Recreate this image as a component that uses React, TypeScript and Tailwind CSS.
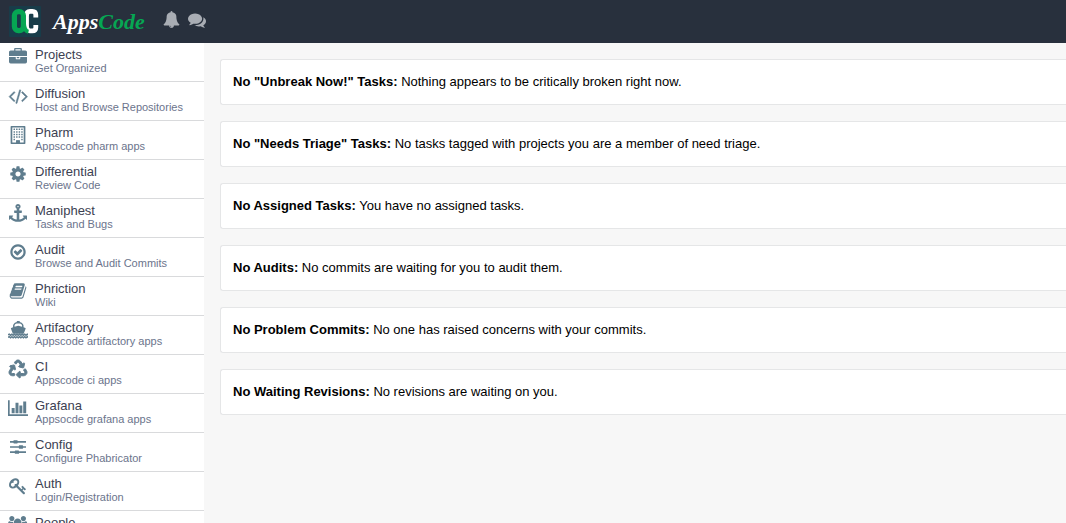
import type { ReactNode } from "react";
import { FaRecycle } from "react-icons/fa";

function Glyph({ width = 1792, children }: { width?: number; children: ReactNode }) {
  return (
    <svg viewBox={`0 0 ${width} 1792`} className="h-[18px] w-auto shrink-0" fill="currentColor" aria-hidden="true">
      {children}
    </svg>
  );
}

const briefcase = (
  <Glyph>
    <path d="M640 256h512v-128h-512v128zm1152 640v480q0 66-47 113t-113 47h-1472q-66 0-113-47t-47-113v-480h672v160q0 26 19 45t45 19h320q26 0 45-19t19-45v-160h672zm-768 0v128h-256v-128h256zm768-480v384h-1792v-384q0-66 47-113t113-47h352v-160q0-40 28-68t68-28h576q40 0 68 28t28 68v160h352q66 0 113 47t47 113z" />
  </Glyph>
);

const code = (
  <Glyph width={2048}>
    <path
      stroke="currentColor"
      strokeWidth="50"
      d="M681 1399l-50 50q-10 10-23 10t-23-10l-466-466q-10-10-10-23t10-23l466-466q10-10 23-10t23 10l50 50q10 10 10 23t-10 23l-393 393 393 393q10 10 10 23t-10 23zm591-1067l-373 1291q-4 13-15.5 19.5t-23.5 2.5l-62-17q-13-4-19.5-15.5t-2.5-24.5l373-1291q4-13 15.5-19.5t23.5-2.5l62 17q13 4 19.5 15.5t2.5 24.5zm657 651l-466 466q-10 10-23 10t-23-10l-50-50q-10-10-10-23t10-23l393-393-393-393q-10-10-10-23t10-23l50-50q10-10 23-10t23 10l466 466q10 10 10 23t-10 23z"
    />
  </Glyph>
);

const building = (
  <Glyph>
    <path
      fillRule="evenodd"
      d="M224 0h1344q64 0 64 64v1664q0 64-64 64h-1344q-64 0-64-64v-1664q0-64 64-64zM330 150v1492h374v-202q0-32 32-32h320q32 0 32 32v202h374v-1492z"
    />
    <path d="M720 1430h352v230h-352z" opacity="0.75" />
    {[256, 512, 768, 1024].map((y) =>
      [448, 704, 960, 1216].map((x) => <rect key={`${x}-${y}`} x={x} y={y} width="150" height="150" rx="30" />),
    )}
    <rect x="448" y="1280" width="150" height="150" rx="30" />
    <rect x="1216" y="1280" width="150" height="150" rx="30" />
  </Glyph>
);

const gear = (
  <Glyph>
    <path d="M1152 896q0-106-75-181t-181-75-181 75-75 181 75 181 181 75 181-75 75-181zm512-109v222q0 12-8 23t-20 13l-185 28q-19 54-39 91 35 50 107 138 10 12 10 25t-9 23q-27 37-99 108t-94 71q-12 0-26-9l-138-108q-44 23-91 38-16 136-29 186-7 28-36 28h-222q-14 0-24.5-8.5t-11.5-21.5l-28-184q-49-16-90-37l-141 107q-10 9-25 9-14 0-25-11-126-114-165-168-7-10-7-23 0-12 8-23 15-21 51-66.5t54-70.5q-27-50-41-99l-183-27q-13-2-21-12.5t-8-23.5v-222q0-12 8-23t19-13l186-28q14-46 39-92-40-57-107-138-10-12-10-24 0-10 9-23 26-36 98.5-107.5t94.5-71.5q13 0 26 10l138 107q44-23 91-38 16-136 29-186 7-28 36-28h222q14 0 24.5 8.5t11.5 21.5l28 184q49 16 90 37l142-107q9-9 24-9 13 0 25 10 129 119 165 170 7 8 7 22 0 12-8 23-15 21-51 66.5t-54 70.5q26 50 41 98l183 28q13 2 21 12.5t8 23.5z" />
  </Glyph>
);

const anchor = (
  <Glyph>
    <path d="M960 256q0-26-19-45t-45-19-45 19-19 45 19 45 45 19 45-19 19-45zm832 928v352q0 22-20 30-8 2-12 2-13 0-23-9l-93-93q-119 143-318.5 226.5t-429.5 83.5-429.5-83.5-318.5-226.5l-93 93q-9 9-23 9-4 0-12-2-20-8-20-30v-352q0-14 9-23t23-9h352q22 0 30 20 8 19-7 35l-100 100q67 91 189.5 153.5t271.5 82.5v-647h-192q-26 0-45-19t-19-45v-128q0-26 19-45t45-19h192v-163q-58-34-93-92.5t-35-128.5q0-106 75-181t181-75 181 75 75 181q0 70-35 128.5t-93 92.5v163h192q26 0 45 19t19 45v128q0 26-19 45t-45 19h-192v647q149-20 271.5-82.5t189.5-153.5l-100-100q-15-16-7-35 8-20 30-20h352q14 0 23 9t9 23z" />
  </Glyph>
);

const checkCircle = (
  <Glyph>
    <path d="M1299 813l-422 422q-19 19-45 19t-45-19l-294-294q-19-19-19-45t19-45l102-102q19-19 45-19t45 19l147 147 275-275q19-19 45-19t45 19l102 102q19 19 19 45t-19 45zm141 83q0-148-73-273t-198-198-273-73-273 73-198 198-73 273 73 273 198 198 273 73 273-73 198-198 73-273zm224 0q0 209-103 385.5t-279.5 279.5-385.5 103-385.5-103-279.5-279.5-103-385.5 103-385.5 279.5-279.5 385.5-103 385.5 103 279.5 279.5 103 385.5z" />
  </Glyph>
);

const book = (
  <Glyph>
    <path d="M1703 478q40 57 18 129l-275 906q-19 64-76.5 107.5t-122.5 43.5h-923q-77 0-148.5-53.5t-99.5-131.5q-24-67-2-127 0-4 3-27t4-37q1-8-3-21.5t-3-19.5q2-11 8-21t16.5-23.5 16.5-23.5q23-38 45-91.5t30-91.5q3-10 .5-30t-.5-28q3-11 17-28t17-23q21-36 42-92t25-90q1-9-2.5-32t.5-28q4-13 22-30.5t22-22.5q19-26 42.5-84.5t27.5-96.5q1-8-3-25.5t-2-26.5q2-8 9-18t18-23 17-21q8-12 16.5-30.5t15-35 16-36 19.5-32 26.5-23.5 36-11.5 47.5 5.5l-1 3q38-9 51-9h761q74 0 114 56t18 130l-274 906q-36 119-71.5 153.5t-128.5 34.5h-869q-27 0-38 15-11 16-1 43 24 70 144 70h923q29 0 56-15.5t35-41.5l300-987q7-22 5-57 38 15 59 43zm-1064 2q-4 13 2 22.5t20 9.5h608q13 0 25.5-9.5t16.5-22.5l21-64q4-13-2-22.5t-20-9.5h-608q-13 0-25.5 9.5t-16.5 22.5zm-83 256q-4 13 2 22.5t20 9.5h608q13 0 25.5-9.5t16.5-22.5l21-64q4-13-2-22.5t-20-9.5h-608q-13 0-25.5 9.5t-16.5 22.5z" />
  </Glyph>
);

const ship = (
  <Glyph width={2048}>
    <path
      fillRule="evenodd"
      d="M880 0h288v100q230 30 330 230l50 110v190l180 60q50 20 24 80l-190 500h-1076l-190-500q-26-60 24-80l180-60v-190l50-110q100-200 330-230zM650 430v150l374-110 374 110v-150q-60-150-220-180h-308q-160 30-220 180z"
    />
    <path
      d="M0 1390l128-80 128 110 128-110 128 110 128-110 128 110 128-110 128 110 128-110 128 110 128-110 128 110 128-110 128 110 128-110 128 80M0 1640l128-80 128 110 128-110 128 110 128-110 128 110 128-110 128 110 128-110 128 110 128-110 128 110 128-110 128 110 128-110 128 80"
      fill="none"
      stroke="currentColor"
      strokeWidth="150"
    />
  </Glyph>
);

const recycle = <FaRecycle className="size-[18px] overflow-visible stroke-current stroke-[28px]" />;

const chart = (
  <Glyph width={2048}>
    <path d="M660 896v512h-296v-512h296zm384-512v1024h-296v-1024h296zm1004 1132v168h-2048v-1556h168v1388h1880zm-620-876v768h-296v-768h296zm384-384v1152h-296v-1152h296z" />
  </Glyph>
);

const sliders = (
  <Glyph>
    <path d="M100 300h412v168h-412zM832 300h860v168h-860zM500 220h300q64 0 64 64v200q0 64-64 64h-300q-64 0-64-64v-200q0-64 64-64zM100 812h924v168h-924zM1344 812h348v168h-348zM1040 732h300q64 0 64 64v200q0 64-64 64h-300q-64 0-64-64v-200q0-64 64-64zM100 1324h540v168h-540zM960 1324h732v168h-732zM640 1244h300q64 0 64 64v200q0 64-64 64h-300q-64 0-64-64v-200q0-64 64-64z" />
  </Glyph>
);

const key = (
  <Glyph>
    <path d="M832 512q0-80-56-136t-136-56-136 56-56 136q0 42 19 83-41-19-83-19-80 0-136 56t-56 136 56 136 136 56 136-56 56-136q0-42-19-83 41 19 83 19 80 0 136-56t56-136zm851 704q0 17-49 66t-66 49q-9 0-28.5-16t-36.5-33-38.5-40-24.5-26l-96 96 220 220q28 28 28 68 0 42-39 81t-81 39q-40 0-68-28l-671-671q-176 131-365 131-163 0-265.5-102.5t-102.5-265.5q0-160 95-313t248-248 313-95q163 0 265.5 102.5t102.5 265.5q0 189-131 365l355 355 96-96q-3-3-26-24.5t-40-38.5-33-36.5-16-28.5q0-17 49-66t66-49q13 0 23 10 6 6 46 44.5t82 79.5 86.5 86 73 78 28.5 41z" />
  </Glyph>
);

const people = (
  <Glyph width={1920}>
    <path d="M593 896q-162 5-265 128h-134q-82 0-138-40.5t-56-118.5q0-353 124-353 6 0 43.5 21t97.5 42.5 119 21.5q67 0 133-23-5 37-5 66 0 139 81 256zm1071 637q0 120-73 189.5t-194 69.5h-874q-121 0-194-69.5t-73-189.5q0-53 3.5-103.5t14-109 26.5-108.5 43-97.5 62-81 85.5-53.5 111.5-20q10 0 43 21.5t73 48 107 48 135 21.5 135-21.5 107-48 73-48 43-21.5q61 0 111.5 20t85.5 53.5 62 81 43 97.5 26.5 108.5 14 109 3.5 103.5zm-1024-1277q0 106-75 181t-181 75-181-75-75-181 75-181 181-75 181 75 75 181zm704 384q0 159-112.5 271.5t-271.5 112.5-271.5-112.5-112.5-271.5 112.5-271.5 271.5-112.5 271.5 112.5 112.5 271.5zm576 225q0 78-56 118.5t-138 40.5h-134q-103-123-265-128 81-117 81-256 0-29-5-66 66 23 133 23 59 0 119-21.5t97.5-42.5 43.5-21q124 0 124 353zm-128-609q0 106-75 181t-181 75-181-75-75-181 75-181 181-75 181 75 75 181z" />
  </Glyph>
);

const apps: { name: string; detail?: string; icon: ReactNode }[] = [
  { name: "Projects", detail: "Get Organized", icon: briefcase },
  { name: "Diffusion", detail: "Host and Browse Repositories", icon: code },
  { name: "Pharm", detail: "Appscode pharm apps", icon: building },
  { name: "Differential", detail: "Review Code", icon: gear },
  { name: "Maniphest", detail: "Tasks and Bugs", icon: anchor },
  { name: "Audit", detail: "Browse and Audit Commits", icon: checkCircle },
  { name: "Phriction", detail: "Wiki", icon: book },
  { name: "Artifactory", detail: "Appscode artifactory apps", icon: ship },
  { name: "CI", detail: "Appscode ci apps", icon: recycle },
  { name: "Grafana", detail: "Appsocde grafana apps", icon: chart },
  { name: "Config", detail: "Configure Phabricator", icon: sliders },
  { name: "Auth", detail: "Login/Registration", icon: key },
  { name: "People", icon: people },
];

const notices = [
  { title: 'No "Unbreak Now!" Tasks:', text: "Nothing appears to be critically broken right now." },
  { title: 'No "Needs Triage" Tasks:', text: "No tasks tagged with projects you are a member of need triage." },
  { title: "No Assigned Tasks:", text: "You have no assigned tasks." },
  { title: "No Audits:", text: "No commits are waiting for you to audit them." },
  { title: "No Problem Commits:", text: "No one has raised concerns with your commits." },
  { title: "No Waiting Revisions:", text: "No revisions are waiting on you." },
];

function Logo() {
  return (
    <svg viewBox="0 0 32 31" className="h-[31px] w-8 shrink-0" fill="none" aria-hidden="true">
      <rect width="32" height="31" rx="1" fill="#183c49" />
      <path
        d="M26.8 11.5V9Q26.8 5.4 23.4 5.4H21Q17.5 5.4 17.5 10V20Q17.5 24.8 21 24.8H23.4Q26.8 24.8 26.8 21.4V19"
        stroke="#fff"
        strokeWidth="4.8"
      />
      <rect x="5.4" y="5.6" width="9" height="19" rx="4" stroke="#06a653" strokeWidth="5.2" />
      <path d="M15 18q.5 7 4.5 7.8" stroke="#06a653" strokeWidth="4" />
    </svg>
  );
}

export default function App() {
  return (
    <div className="flex h-screen flex-col overflow-hidden bg-[#f7f7f7] font-['Liberation_Sans',Arial,sans-serif] text-[13px] text-black">
      <header className="flex h-[43px] shrink-0 items-center bg-[#28303d] pl-[9px]">
        <a href="#home" className="flex items-center gap-3">
          <Logo />
          <span className="font-['Liberation_Serif',serif] text-[22px] leading-7 font-bold text-white italic">
            Apps<span className="text-[#06a653]">Code</span>
          </span>
        </a>
        <div className="flex items-center gap-2 pb-1 pl-[18px] text-[#a9adb4]">
          <button type="button" aria-label="Notifications" className="flex">
            <svg viewBox="0 0 1792 1792" className="size-[17px]" fill="currentColor" aria-hidden="true">
              <path d="M912 1696q0-16-16-16-59 0-101.5-42.5t-42.5-101.5q0-16-16-16t-16 16q0 73 51.5 124.5t124.5 51.5q16 0 16-16zm816-288q0 52-38 90t-90 38h-448q0 106-75 181t-181 75-181-75-75-181h-448q-52 0-90-38t-38-90q50-42 91-88t85-119.5 74.5-158.5 50-206 19.5-260q0-152 117-282.5t307-158.5q-8-19-8-39 0-40 28-68t68-28 68 28 28 68q0 20-8 39 190 28 307 158.5t117 282.5q0 139 19.5 260t50 206 74.5 158.5 85 119.5 91 88z" />
            </svg>
          </button>
          <button type="button" aria-label="Messages" className="flex">
            <svg viewBox="0 0 1792 1792" className="size-[18px]" fill="currentColor" aria-hidden="true">
              <path d="M1408 768q0 139-94 257t-256.5 186.5-353.5 68.5q-86 0-176-16-124 88-278 128-36 9-86 16h-3q-11 0-20.5-8t-11.5-21q-1-3-1-6.5t.5-6.5 2-6l2.5-5 3.5-5.5 4-5 4.5-5 4-4.5q5-6 23-25t26-29.5 22.5-29 25-38.5 20.5-44q-124-72-195-177t-71-224q0-139 94-257t256.5-186.5 353.5-68.5 353.5 68.5 256.5 186.5 94 257zm384 256q0 120-71 224.5t-195 176.5q10 24 20.5 44t25 38.5 22.5 29 26 29.5 23 25q1 1 4 4.5t4.5 5 4 5 3.5 5.5l2.5 5 2 6 .5 6.5-1 6.5q-3 14-13 22t-22 7q-50-7-86-16-154-40-278-128-90 16-176 16-271 0-472-132 58 4 88 4 161 0 309-45t264-129q125-92 192-212t67-254q0-77-23-152 129 71 204 178t75 230z" />
            </svg>
          </button>
        </div>
      </header>
      <div className="flex min-h-0 flex-1">
        <nav className="w-[204px] shrink-0 overflow-hidden bg-white">
          <ul>
            {apps.map((app) => (
              <li key={app.name} className="border-b border-[#d9dadc]">
                <a href={`#${app.name.toLowerCase()}`} className="flex h-[38px] gap-[3px] pl-1">
                  <span className="flex w-7 shrink-0 justify-center pt-[5px] text-[#5f7d8e]">{app.icon}</span>
                  <span className="flex flex-col pt-1">
                    <span className="leading-4 text-[#3c4152]">{app.name}</span>
                    {app.detail && <span className="text-[11px] leading-[11px] text-[#6b748c]">{app.detail}</span>}
                  </span>
                </a>
              </li>
            ))}
          </ul>
        </nav>
        <main className="flex min-w-0 flex-1 flex-col gap-4 pt-4 pl-4">
          {notices.map((notice) => (
            <section key={notice.title} className="rounded-l-[3px] border border-r-0 border-[#e5e6e7] bg-white p-3 leading-5">
              <p>
                <strong>{notice.title}</strong> {notice.text}
              </p>
            </section>
          ))}
        </main>
      </div>
    </div>
  );
}
